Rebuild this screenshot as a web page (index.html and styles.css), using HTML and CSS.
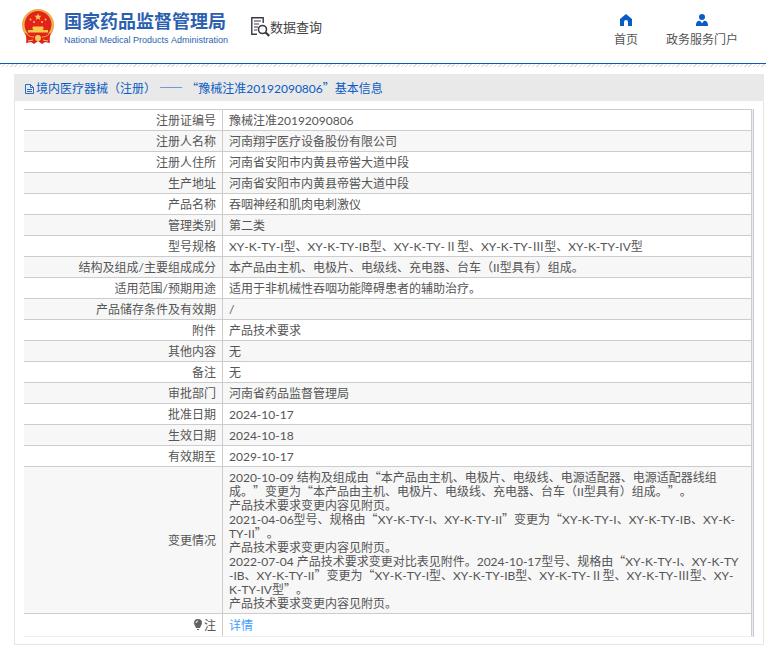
FILE: index.html
```html
<!DOCTYPE html>
<html lang="zh-CN">
<head>
    <meta charset="UTF-8">
    <meta name="viewport" content="width=device-width, initial-scale=1">
    <title>国家药品监督管理局 - 数据查询</title>
    <link rel="stylesheet" href="styles.css">
</head>
<body>

    <header class="header">
        <div class="logo">
            <svg class="emblem" viewBox="0 0 32 35">
                <path d="M5 26 L27 26 L28 34 L23 33 L20 35 L16 32 L12 35 L9 33 L4 34 Z" fill="#d8231d"/>
                <circle cx="16" cy="16" r="16" fill="#e9a84a"/>
                <circle cx="16" cy="16" r="14.500" fill="#f0c04c"/>
                <circle cx="16" cy="15.500" r="13.500" fill="#e2231a"/>
                <path d="M16 4.500l1 2.300h2.500l-2 1.600.8 2.500-2.300-1.500-2.300 1.500.8-2.500-2-1.600H15z" fill="#f8c84c"/>
                <g fill="#f8c84c">
                    <circle cx="8.500" cy="10.500" r="1"/>
                    <circle cx="12" cy="13" r="1"/>
                    <circle cx="20" cy="13" r="1"/>
                    <circle cx="23.500" cy="10.500" r="1"/>
                    <path d="M11 17.500h10l1 2h-1V21h5v2.500H6V21h5v-1.500h-1z"/>
                </g>
                <path d="M3 23c4 3 8 3.500 13 3.500S25 26 29 23l-2 9-6 1-5-2-5 2-6-1z" fill="#e2231a"/>
                <path d="M3 23c3 4 6 5 9 5M29 23c-3 4-6 5-9 5" fill="none" stroke="#f0b848"/>
                <circle cx="16" cy="29" r="3" fill="#f3c65a"/>
                <path d="M6 32l5-1M26 32l-5-1" stroke="#f3c65a"/>
            </svg>
            <div class="logo-text">
                <div class="logo-cn">国家药品监督管理局</div>
                <div class="logo-en">National Medical Products Administration</div>
            </div>
        </div>

        <div class="query">
            <svg class="query-icon" viewBox="0 0 20 20" fill="none" stroke="#3a3840">
                <path d="M7 17.200H1.800V.8H13.200V6" stroke-width="1.400"/>
                <path d="M4 4h7M4 7h5M4 10h4M4 13h3" stroke-width="1.200"/>
                <circle cx="12.500" cy="12.500" r="4" stroke-width="1.600"/>
                <path d="M15.500 15.500L19.300 18.800" stroke-width="2.200"/>
            </svg>
            <span>数据查询</span>
        </div>

        <nav class="nav">
            <a href="#">
                <svg viewBox="0 0 14 12"><path d="M7 0L13 5V12H9V8a2 2 0 0 0-4 0v4H1V5z" fill="#0a5cc4"/></svg>
                <span>首页</span>
            </a>
            <a href="#">
                <svg viewBox="0 0 14 12"><circle cx="7" cy="3" r="3" fill="#0a5cc4"/><path d="M1 12c0-4 1.500-5.200 4-5.200l2 2.400 2-2.400c2.500 0 4 1.200 4 5.200z" fill="#0a5cc4"/></svg>
                <span>政务服务门户</span>
            </a>
        </nav>
    </header>
    <div class="stripe"></div>

    <main class="panel">
        <h1 class="panel-title">
            <svg class="doc-icon" viewBox="0 0 11 12" fill="none" stroke="#2b6cc9"><path d="M1.500 1.500H6.500L9.500 4.500V10.500H1.500zM6.500 1.500V4.500H9.500M3 6.500H8M3 8.500H8"/></svg>
            <span>境内医疗器械（注册） <span class="q">——</span> <span class="q">“</span>豫械注准20192090806<span class="q">”</span>基本信息</span>
        </h1>

        <div class="table-wrap">
            <table class="info">
                <tr><th scope="row">注册证编号</th><td>豫械注准20192090806</td></tr>
                <tr><th scope="row">注册人名称</th><td>河南翔宇医疗设备股份有限公司</td></tr>
                <tr><th scope="row">注册人住所</th><td>河南省安阳市内黄县帝喾大道中段</td></tr>
                <tr><th scope="row">生产地址</th><td>河南省安阳市内黄县帝喾大道中段</td></tr>
                <tr><th scope="row">产品名称</th><td>吞咽神经和肌肉电刺激仪</td></tr>
                <tr><th scope="row">管理类别</th><td>第二类</td></tr>
                <tr><th scope="row">型号规格</th><td>XY-K-TY-I型、XY-K-TY-IB型、XY-K-TY-Ⅱ型、XY-K-TY-Ⅲ型、XY-K-TY-IV型</td></tr>
                <tr><th scope="row">结构及组成/主要组成成分</th><td>本产品由主机、电极片、电级线、充电器、台车（II型具有）组成。</td></tr>
                <tr><th scope="row">适用范围/预期用途</th><td>适用于非机械性吞咽功能障碍患者的辅助治疗。</td></tr>
                <tr><th scope="row">产品储存条件及有效期</th><td>/</td></tr>
                <tr><th scope="row">附件</th><td>产品技术要求</td></tr>
                <tr><th scope="row">其他内容</th><td>无</td></tr>
                <tr><th scope="row">备注</th><td>无</td></tr>
                <tr><th scope="row">审批部门</th><td>河南省药品监督管理局</td></tr>
                <tr><th scope="row">批准日期</th><td>2024-10-17</td></tr>
                <tr><th scope="row">生效日期</th><td>2024-10-18</td></tr>
                <tr><th scope="row">有效期至</th><td>2029-10-17</td></tr>
                <tr>
                    <th scope="row">变更情况</th>
                    <td>
                        2020-10-09 结构及组成由<span class="q">“</span>本产品由主机、电极片、电级线、电源适配器、电源适配器线组<br>
                        成。<span class="q">”</span>变更为<span class="q">“</span>本产品由主机、电极片、电级线、充电器、台车（II型具有）组成。<span class="q">”</span>。<br>
                        产品技术要求变更内容见附页。<br>
                        2021-04-06型号、规格由<span class="q">“</span>XY-K-TY-I、XY-K-TY-II<span class="q">”</span>变更为<span class="q">“</span>XY-K-TY-I、XY-K-TY-IB、XY-K-<br>
                        TY-II<span class="q">”</span>。<br>
                        产品技术要求变更内容见附页。<br>
                        2022-07-04 产品技术要求变更对比表见附件。2024-10-17型号、规格由<span class="q">“</span>XY-K-TY-I、XY-K-TY<br>
                        -IB、XY-K-TY-II<span class="q">”</span>变更为<span class="q">“</span>XY-K-TY-I型、XY-K-TY-IB型、XY-K-TY-Ⅱ型、XY-K-TY-Ⅲ型、XY-<br>
                        K-TY-IV型<span class="q">”</span>。<br>
                        产品技术要求变更内容见附页。
                    </td>
                </tr>
                <tr class="note">
                    <th scope="row"><svg class="bulb" viewBox="0 0 10 12"><path d="M5 0a4 4 0 0 1 4 4c0 2-1.500 3-2 5H3C2.500 7 1 6 1 4a4 4 0 0 1 4-4zM4 10h2v1H4z" fill="#606266"/><path d="M3 4a2 2 0 0 1 2-2" fill="none" stroke="#fff"/></svg>注</th>
                    <td><a href="#">详情</a></td>
                </tr>
            </table>
        </div>
    </main>

</body>
</html>
```
FILE: styles.css
```css
* {
    box-sizing: border-box;
}

body {
    margin: 0;
    background: #fff;
    color: #555;
    font-family: Lato, "Noto Sans CJK SC", sans-serif;
    font-size: 12px;
    line-height: 14px;
    font-kerning: none;
    text-spacing-trim: space-all;
}

a {
    color: inherit;
    text-decoration: none;
}

svg {
    display: block;
}

/* quotes and dashes take full-width cells */
.q {
    font-family: "Noto Sans CJK SC", sans-serif;
    line-height: 0;
}

.header {
    display: flex;
    align-items: flex-start;
    height: 64px;
    padding: 9px 28px 0 22px;
    border-bottom: 1px solid #0a5cb8;
}

.logo {
    display: flex;
    gap: 10px;
}

.emblem {
    width: 32px;
    height: 35px;
}

.logo-text {
    width: 162px;
    color: #2b5fb0;
    white-space: nowrap;
}

.logo-cn {
    font-size: 18px;
    font-weight: bold;
    line-height: 25px;
}

.logo-en {
    font-family: "Liberation Sans", Arial, sans-serif;
    font-size: 9px;
    line-height: 12px;
}

.query {
    display: flex;
    align-items: center;
    margin: 8px 0 0 24px;
    color: #444;
    font-size: 13px;
    line-height: 20px;
}

.query-icon {
    width: 20px;
    height: 20px;
}

.nav {
    display: flex;
    gap: 28px;
    margin: 5px 0 0 auto;
}

.nav a {
    display: flex;
    flex-direction: column;
    align-items: center;
    gap: 7px;
}

.nav svg {
    width: 14px;
    height: 12px;
}

.stripe {
    height: 3px;
    background: repeating-linear-gradient(135deg, #ddd 0 1px, #fff 1px 3px);
}

.panel {
    margin: 7px 2px 4px 14px;
    border: 1px solid #e6e6e6;
    border-top: 0;
}

.panel-title {
    display: flex;
    align-items: center;
    height: 27px;
    margin: 0 -1px;
    padding: 2px 10px 0;
    background: #e9e9e9;
    color: #0a5cc4;
    font-size: 12px;
    font-weight: normal;
}

.doc-icon {
    width: 11px;
    height: 12px;
    margin-right: 1px;
}

.table-wrap {
    margin: 8px 9px 7px;
    padding-right: 1px;
    border-right: 1px solid #c8c8d0;
    background: #ebeef5;
}

.info {
    width: 100%;
    border-spacing: 0;
    border-bottom: 1px solid #ebeef5;
    background: #fff;
}

.info th,
.info td {
    padding: 4px 6px 2px;
    border-top: 1px solid #ccc;
    border-right: 1px solid #ccc;
    font-weight: normal;
}

.info th {
    width: 199px;
    text-align: right;
}

.info td {
    padding-right: 0;
    text-align: left;
}

.info tr:nth-child(even) {
    background: #f7f7f7;
}

.info .note {
    background: #fff;
}

.note th,
.note td {
    line-height: 16px;
}

.note a {
    color: #409eff;
}

.bulb {
    display: inline-block;
    width: 10px;
    height: 12px;
    margin-right: 1px;
    vertical-align: -1px;
}
```
